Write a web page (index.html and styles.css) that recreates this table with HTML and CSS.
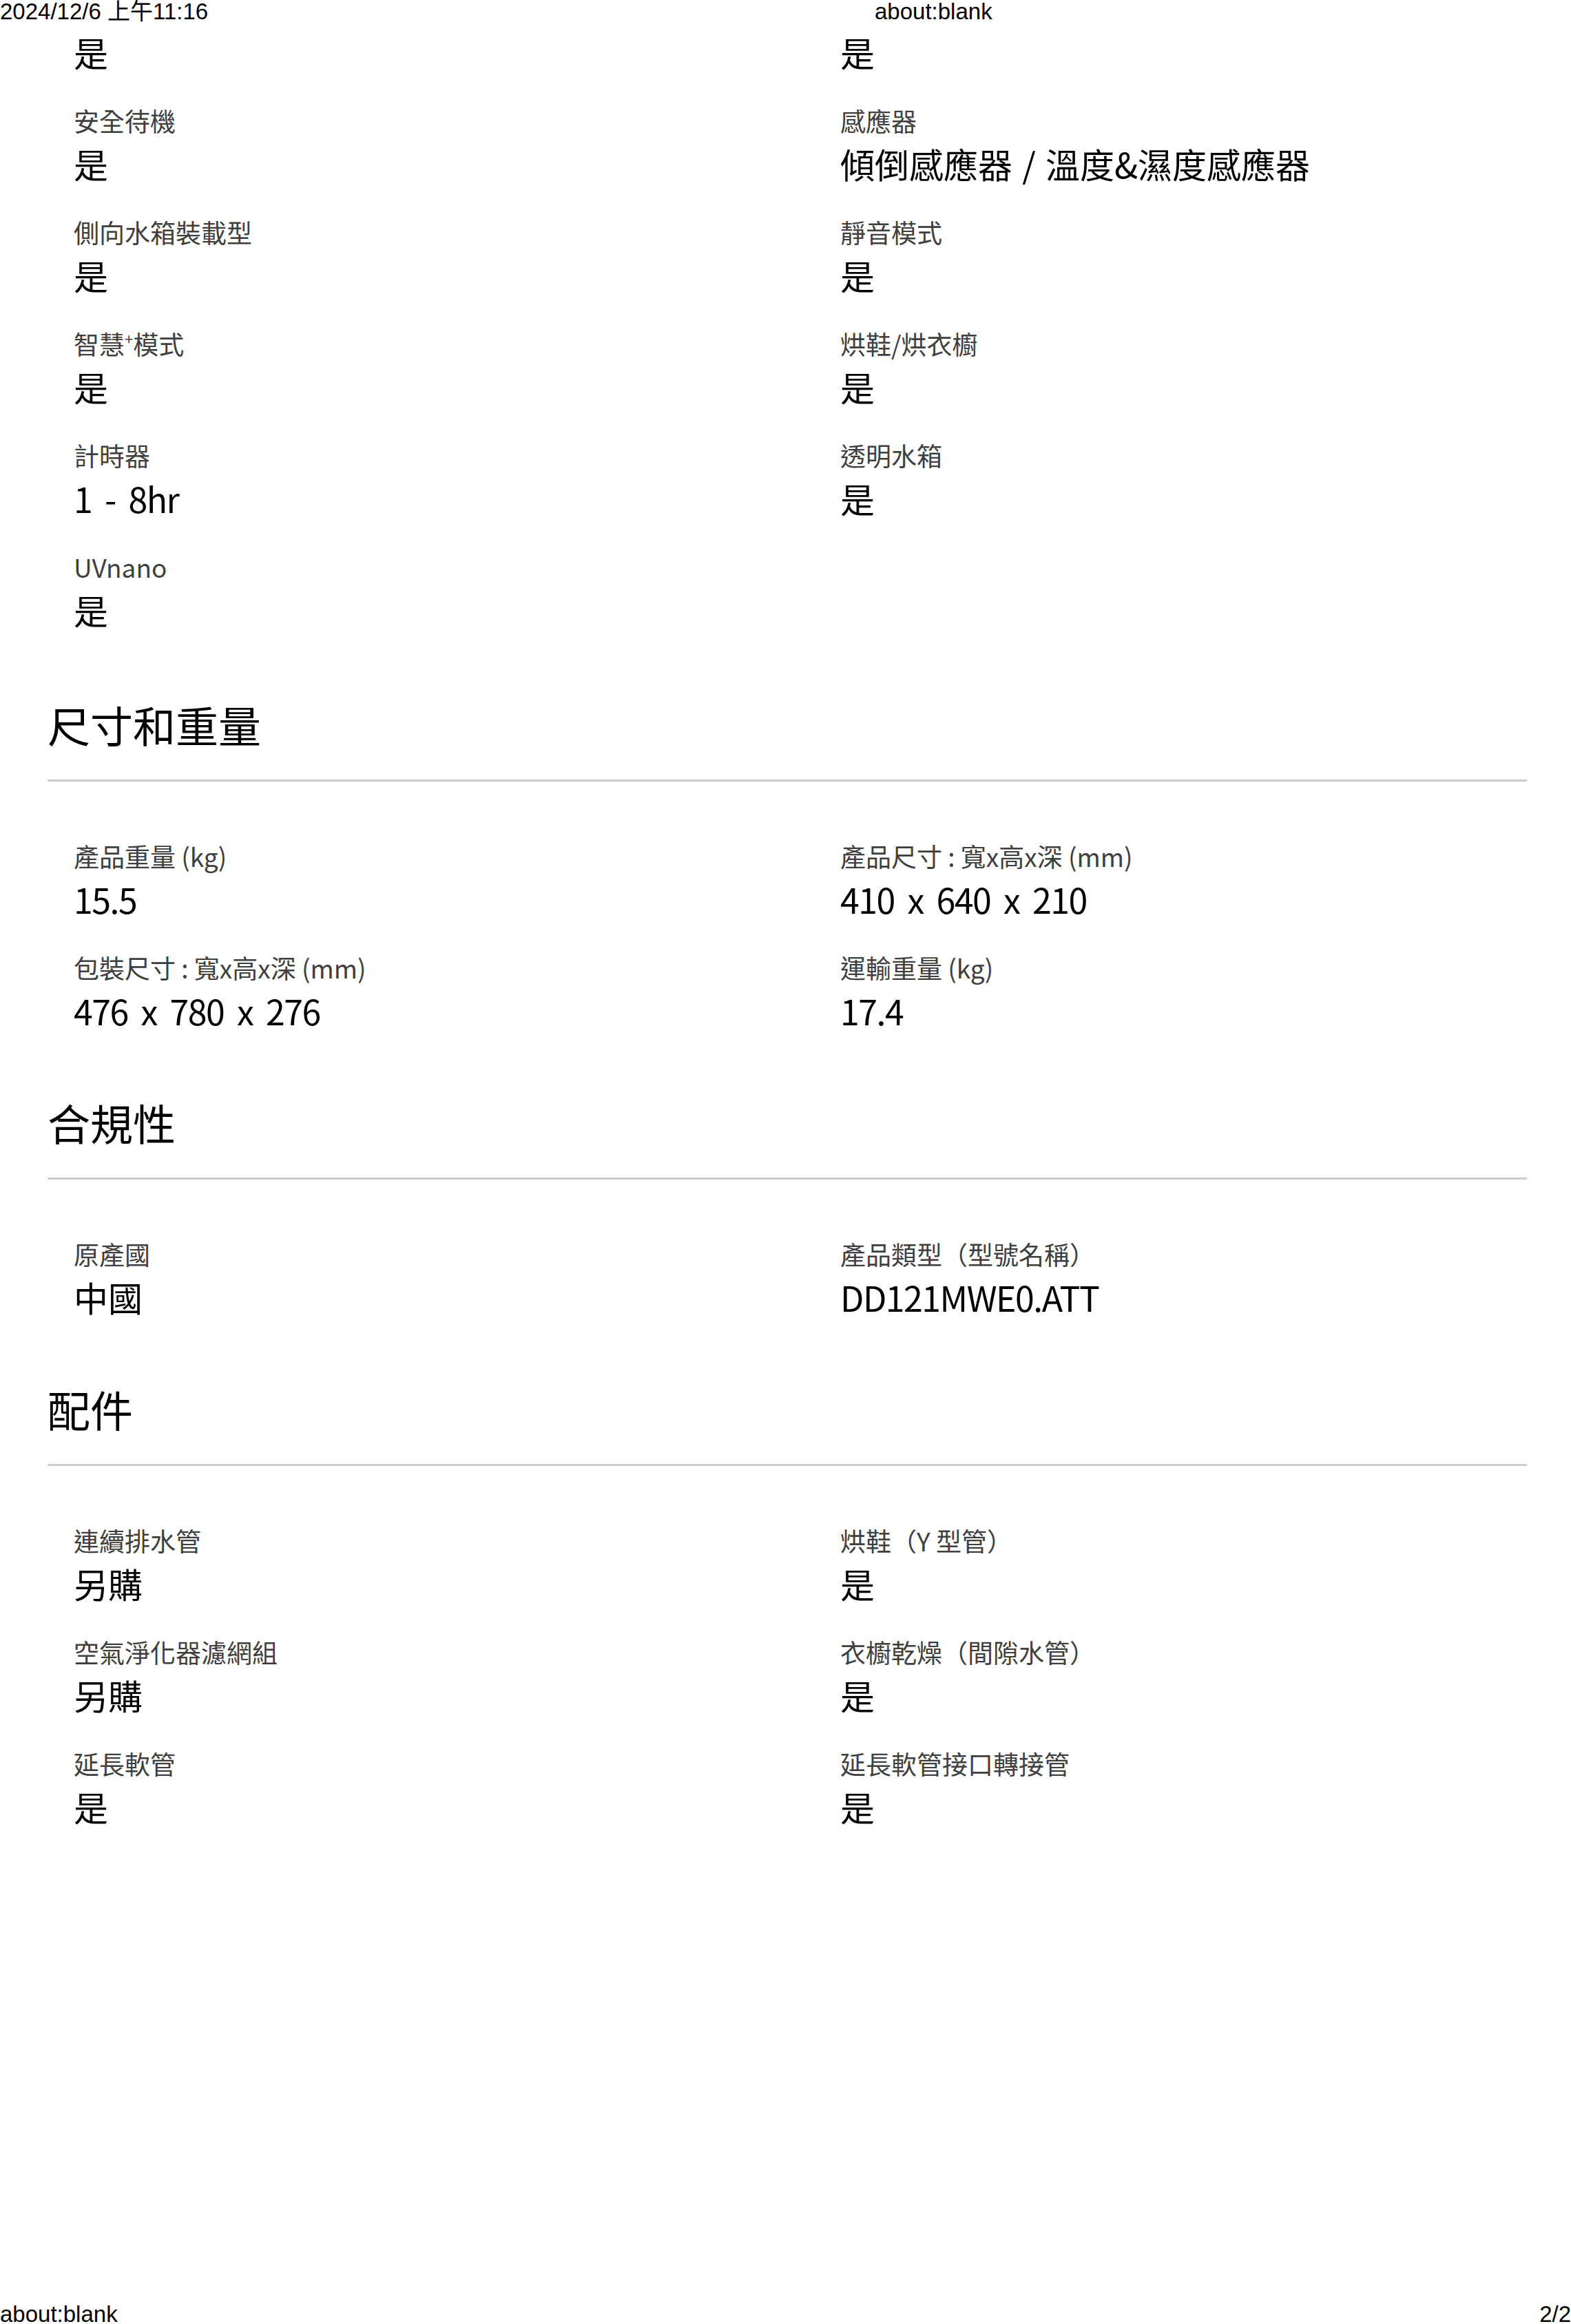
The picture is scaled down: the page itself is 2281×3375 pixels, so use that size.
FILE: index.html
```html
<!DOCTYPE html>
<html lang="zh-Hant">
<head>
<meta charset="utf-8">
<title>about:blank</title>
<link rel="stylesheet" href="styles.css">
</head>
<body>
<header class="print-head">
  <span class="print-date">2024/12/6 上午11:16</span>
  <span class="print-title">about:blank</span>
</header>

<main class="page">
  <div class="specs">
    <div class="item"><div class="value">是</div></div>
    <div class="item"><div class="value">是</div></div>

    <div class="item"><div class="label">安全待機</div><div class="value">是</div></div>
    <div class="item"><div class="label">感應器</div><div class="value">傾倒感應器 / 溫度&amp;濕度感應器</div></div>

    <div class="item"><div class="label">側向水箱裝載型</div><div class="value">是</div></div>
    <div class="item"><div class="label">靜音模式</div><div class="value">是</div></div>

    <div class="item"><div class="label">智慧<sup class="plus">+</sup>模式</div><div class="value">是</div></div>
    <div class="item"><div class="label">烘鞋/烘衣櫥</div><div class="value">是</div></div>

    <div class="item"><div class="label">計時器</div><div class="value latin">1 - 8hr</div></div>
    <div class="item"><div class="label">透明水箱</div><div class="value">是</div></div>

    <div class="item"><div class="label">UVnano</div><div class="value">是</div></div>
  </div>

  <section class="section">
    <h2 class="section-title">尺寸和重量</h2>
    <div class="specs">
      <div class="item"><div class="label">產品重量 (kg)</div><div class="value latin">15.5</div></div>
      <div class="item"><div class="label">產品尺寸 : 寬x高x深 (mm)</div><div class="value latin">410 x 640 x 210</div></div>
      <div class="item"><div class="label">包裝尺寸 : 寬x高x深 (mm)</div><div class="value latin">476 x 780 x 276</div></div>
      <div class="item"><div class="label">運輸重量 (kg)</div><div class="value latin">17.4</div></div>
    </div>
  </section>

  <section class="section">
    <h2 class="section-title">合規性</h2>
    <div class="specs">
      <div class="item"><div class="label">原產國</div><div class="value">中國</div></div>
      <div class="item"><div class="label">產品類型（型號名稱）</div><div class="value latin">DD121MWE0.ATT</div></div>
    </div>
  </section>

  <section class="section">
    <h2 class="section-title">配件</h2>
    <div class="specs">
      <div class="item"><div class="label">連續排水管</div><div class="value">另購</div></div>
      <div class="item"><div class="label">烘鞋（Y 型管）</div><div class="value">是</div></div>
      <div class="item"><div class="label">空氣淨化器濾網組</div><div class="value">另購</div></div>
      <div class="item"><div class="label">衣櫥乾燥（間隙水管）</div><div class="value">是</div></div>
      <div class="item"><div class="label">延長軟管</div><div class="value">是</div></div>
      <div class="item"><div class="label">延長軟管接口轉接管</div><div class="value">是</div></div>
    </div>
  </section>
</main>

<footer class="print-foot">
  <span>about:blank</span>
  <span>2/2</span>
</footer>
</body>
</html>
```

FILE: styles.css
```css
html, body {
  margin: 0;
  padding: 0;
  background: #ffffff;
}

body {
  height: 3375px;
  overflow: hidden;
  display: flex;
  flex-direction: column;
  font-family: "Noto Sans CJK TC", "Noto Sans", sans-serif;
  color: #000000;
}

.print-head,
.print-foot {
  font-family: "Liberation Sans", Arial, "Noto Sans CJK TC", sans-serif;
  font-size: 33px;
  line-height: 34px;
  color: #000000;
}

.print-head {
  height: 40px;
  display: grid;
  grid-template-columns: 1270px 1fr;
}

.print-foot {
  margin-top: auto;
  height: 31px;
  display: flex;
  justify-content: space-between;
}

.page {
  padding: 0 64px 0 69px;
}

.specs {
  display: grid;
  grid-template-columns: 1fr 1fr;
  column-gap: 154px;
  row-gap: 38px;
  padding: 0 38px;
}

.label {
  font-size: 37px;
  line-height: 54px;
  color: #3f3f3f;
  white-space: nowrap;
}

.plus {
  font-size: 22px;
  line-height: 0;
  vertical-align: 14px;
}

.value {
  font-size: 50px;
  line-height: 70px;
  color: #000000;
  white-space: nowrap;
  word-spacing: 3px;
}

.value.latin {
  letter-spacing: -1.5px;
  word-spacing: 9px;
}

.section {
  margin-top: 86px;
}

.section:first-of-type {
  margin-top: 90px;
}

.section-title {
  margin: 0 0 81px;
  padding-bottom: 38px;
  border-bottom: 3px solid #cccccc;
  font-size: 62px;
  line-height: 84px;
  font-weight: 400;
  color: #000000;
}
```
